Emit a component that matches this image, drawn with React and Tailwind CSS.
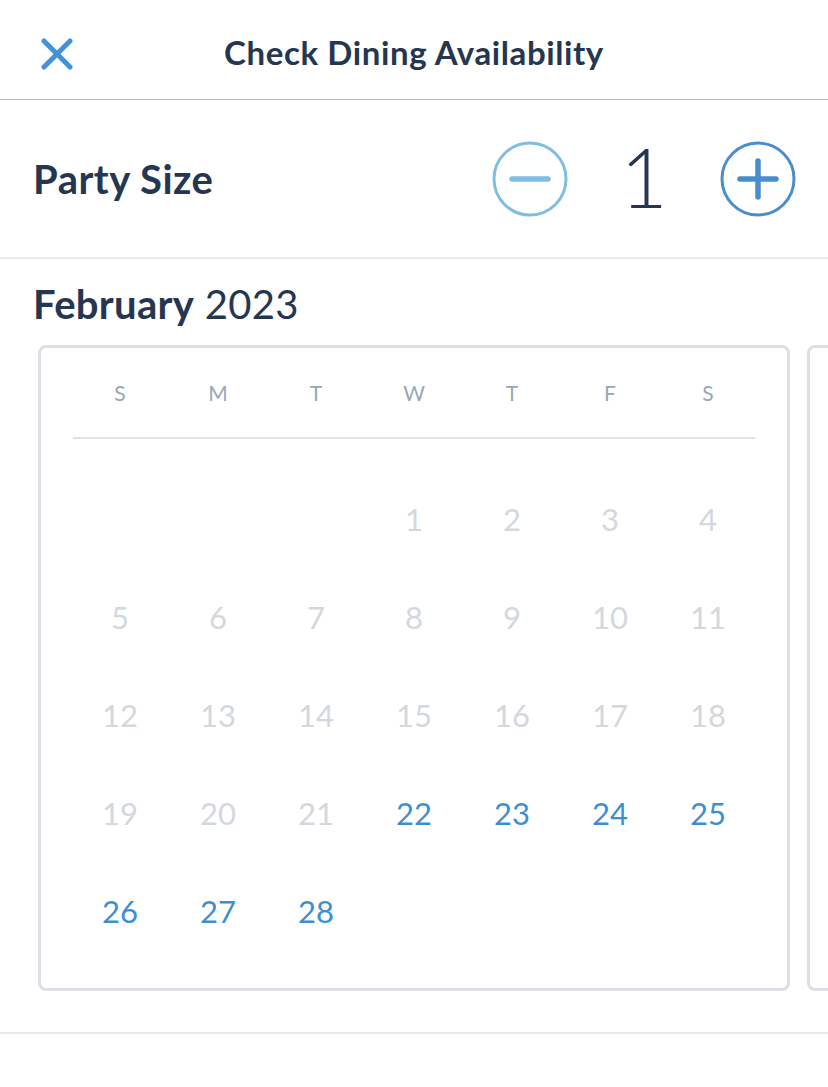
import React from 'react';

const days = ['S', 'M', 'T', 'W', 'T', 'F', 'S'];

// February 2023 starts on a Wednesday
const cells = [
  ...Array(3).fill(null),
  ...Array.from({ length: 28 }, (_, i) => i + 1),
];

function CircleButton({ kind, color }) {
  return (
    <svg width="78" height="78" viewBox="0 0 78 78" fill="none">
      <circle cx="39" cy="39" r="36" stroke={color} strokeWidth="3" />
      <line x1="21" y1="39" x2="57" y2="39" stroke={color} strokeWidth="5.5" strokeLinecap="round" />
      {kind === 'plus' && (
        <line x1="39" y1="21" x2="39" y2="57" stroke={color} strokeWidth="5.5" strokeLinecap="round" />
      )}
    </svg>
  );
}

export default function App() {
  const rows = [];
  for (let i = 0; i < cells.length; i += 7) rows.push(cells.slice(i, i + 7));
  while (rows[rows.length - 1].length < 7) rows[rows.length - 1].push(null);

  return (
    <div className="w-[828px] h-[1087px] bg-white overflow-hidden text-[#253650] font-['Lato',sans-serif]">
      {/* Header */}
      <div className="relative h-[100px] flex items-center justify-center border-b border-[#b8b8b8]">
        <button className="absolute left-[40px] top-[38px]">
          <svg width="34" height="32" viewBox="0 0 34 32" fill="none">
            <line x1="4" y1="3" x2="30" y2="29" stroke="#4391d8" strokeWidth="5" strokeLinecap="round" />
            <line x1="30" y1="3" x2="4" y2="29" stroke="#4391d8" strokeWidth="5" strokeLinecap="round" />
          </svg>
        </button>
        <h1 className="text-[33px] font-bold tracking-[0.6px] mt-[6px]">Check Dining Availability</h1>
      </div>

      {/* Party size */}
      <div className="h-[159px] flex items-center justify-between pl-[33px] pr-[31px] border-b-2 border-[#e6e9ee]">
        <span className="text-[40px] font-bold tracking-[0.5px]">Party Size</span>
        <div className="flex items-center">
          <CircleButton kind="minus" color="#80bde3" />
          <span className="w-[150px] text-center text-[82px] font-light leading-none -mt-[6px]">1</span>
          <CircleButton kind="plus" color="#4a8dcc" />
        </div>
      </div>

      {/* Month */}
      <div className="pl-[33px] pt-[23px] pb-[19px] text-[40px] leading-[44px] tracking-[0.3px]">
        <span className="font-bold">February</span> <span>2023</span>
      </div>

      <div className="flex gap-[17px] pl-[38px]">
        <div className="shrink-0 w-[752px] h-[646px] border-[3px] border-[#dcdfe3] rounded-[8px] pl-[30px] pr-[30px]">
          <div className="grid grid-cols-7 h-[89px] items-end pb-[29px] text-[#9aa6b6] text-[21px]">
            {days.map((d, i) => (
              <div key={i} className="text-center">{d}</div>
            ))}
          </div>
          <div className="mx-[2px] border-b-2 border-[#dfe2e6]" />
          <div className="pt-[31px]">
            {rows.map((row, ri) => (
              <div key={ri} className="grid grid-cols-7 h-[98px] items-center">
                {row.map((n, ci) => (
                  <div
                    key={ci}
                    className={
                      'text-center text-[31px] ' +
                      (n && n >= 22 ? 'text-[#3b8fd3]' : 'text-[#d3d8de]')
                    }
                  >
                    {n || ''}
                  </div>
                ))}
              </div>
            ))}
          </div>
        </div>
        <div className="shrink-0 w-[752px] h-[646px] border-[3px] border-[#dcdfe3] rounded-[8px]" />
      </div>

      <div className="mt-[41px] border-b-2 border-[#e6e9f2]" />
    </div>
  );
}
